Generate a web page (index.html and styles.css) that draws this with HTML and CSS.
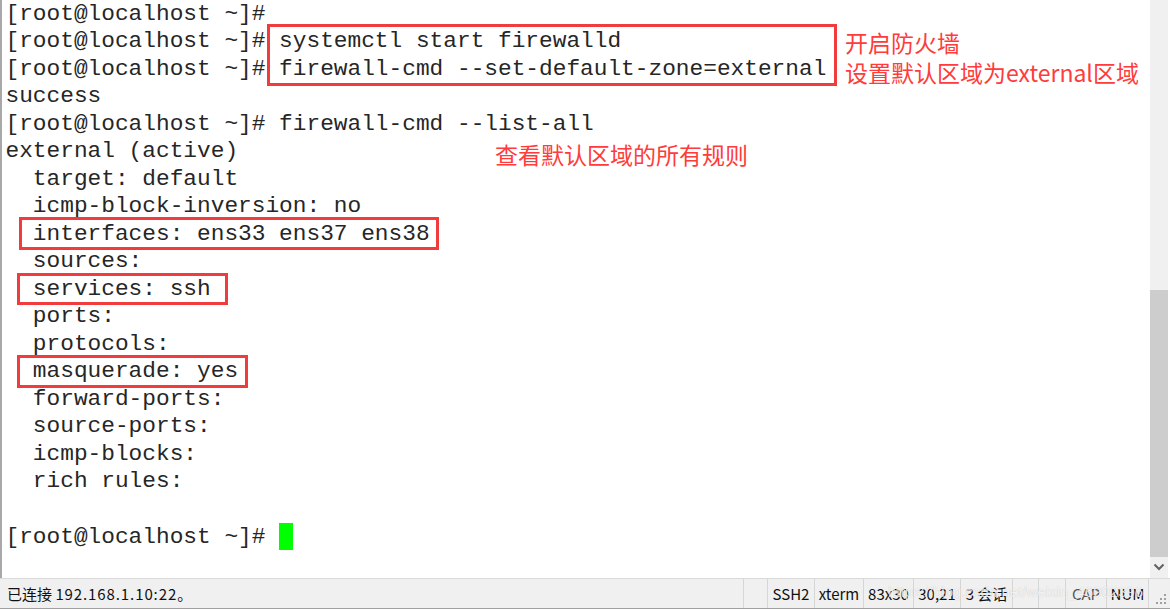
FILE: index.html
```html
<!DOCTYPE html>
<html lang="zh-CN">
<head>
<meta charset="utf-8">
<title>firewalld</title>
<link rel="stylesheet" href="styles.css">
</head>
<body>
<div class="window">
  <div class="main">
    <div class="term">
      <div class="lines">
        <div class="line">[root@localhost ~]#</div>
        <div class="line">[root@localhost ~]# systemctl start firewalld</div>
        <div class="line">[root@localhost ~]# firewall-cmd --set-default-zone=external</div>
        <div class="line">success</div>
        <div class="line">[root@localhost ~]# firewall-cmd --list-all</div>
        <div class="line">external (active)</div>
        <div class="line">  target: default</div>
        <div class="line">  icmp-block-inversion: no</div>
        <div class="line">  interfaces: ens33 ens37 ens38</div>
        <div class="line">  sources:</div>
        <div class="line">  services: ssh</div>
        <div class="line">  ports:</div>
        <div class="line">  protocols:</div>
        <div class="line">  masquerade: yes</div>
        <div class="line">  forward-ports:</div>
        <div class="line">  source-ports:</div>
        <div class="line">  icmp-blocks:</div>
        <div class="line">  rich rules:</div>
        <div class="line"> </div>
        <div class="line">[root@localhost ~]# <span class="cursor"></span></div>
      </div>
      <div class="box box-cmd"></div>
      <div class="box box-if"></div>
      <div class="box box-svc"></div>
      <div class="box box-masq"></div>
      <div class="note note-1">开启防火墙<br>设置默认区域为external区域</div>
      <div class="note note-2">查看默认区域的所有规则</div>
    </div>
    <div class="scrollbar">
      <div class="thumb"></div>
      <div class="arrow">
        <svg width="12" height="8" viewBox="0 0 12 8"><polyline points="1.5,1.5 6,6 10.5,1.5" fill="none" stroke="#606060" stroke-width="2"/></svg>
      </div>
    </div>
  </div>
  <div class="status">
    <div class="status-left">已连接 <span class="addr">192.168.1.10:22</span>。</div>
    <div class="status-right">
      <div class="cell c-empty1"></div>
      <div class="cell c-ssh">SSH2</div>
      <div class="cell c-xterm">xterm</div>
      <div class="cell c-size">83x30</div>
      <div class="cell c-pos">30,21</div>
      <div class="cell c-sess">3 会话</div>
      <div class="cell c-empty2"></div>
      <div class="cell c-empty3"></div>
      <div class="cell c-cap">CAP</div>
      <div class="cell c-num">NUM</div>
      <div class="grip">
        <svg width="12" height="12" viewBox="0 0 12 12" fill="#a0a0a0"><rect x="9" y="1" width="2" height="2"/><rect x="5" y="5" width="2" height="2"/><rect x="9" y="5" width="2" height="2"/><rect x="1" y="9" width="2" height="2"/><rect x="5" y="9" width="2" height="2"/><rect x="9" y="9" width="2" height="2"/></svg>
      </div>
    </div>
    <div class="watermark">https://blog.csdn.net/weixin_46902396</div>
  </div>
</div>
</body>
</html>
```

FILE: styles.css
```css
html, body {
  margin: 0;
  padding: 0;
  background: #ffffff;
}

.window {
  width: 1170px;
  height: 609px;
  display: flex;
  flex-direction: column;
  overflow: hidden;
}

.main {
  height: 578px;
  display: flex;
  flex-direction: row;
}

.term {
  position: relative;
  flex: 1;
  border-left: 2px solid #a8a8a8;
  background: #ffffff;
  overflow: hidden;
}

.lines {
  margin-top: 0.5px;
  padding-left: 3.5px;
  font-family: "Liberation Mono", "Courier New", monospace;
  font-size: 22.8px;
  color: #262626;
}

.line {
  height: 27.5px;
  line-height: 27.5px;
  white-space: pre;
}

.cursor {
  display: inline-block;
  width: 14px;
  height: 27px;
  background: #00ff00;
  vertical-align: -7px;
}

.box {
  position: absolute;
  border: 3px solid #f03c3c;
  box-sizing: border-box;
}

.box-cmd {
  left: 265px;
  top: 24px;
  width: 570px;
  height: 62px;
}

.box-if {
  left: 17px;
  top: 217px;
  width: 420px;
  height: 33px;
}

.box-svc {
  left: 15px;
  top: 273px;
  width: 211px;
  height: 32px;
}

.box-masq {
  left: 15px;
  top: 355px;
  width: 231px;
  height: 33px;
}

.note {
  position: absolute;
  font-family: "Noto Sans CJK SC", "Noto Sans", sans-serif;
  font-size: 23px;
  line-height: 30px;
  color: #ff3b3b;
  white-space: nowrap;
}

.note-1 {
  left: 843px;
  top: 27px;
}

.note-2 {
  left: 493px;
  top: 139px;
}

.scrollbar {
  position: relative;
  width: 18px;
  margin-right: 2px;
  background: #f0f0f0;
}

.thumb {
  position: absolute;
  left: 0;
  right: 0;
  top: 290px;
  height: 267px;
  background: #cdcdcd;
}

.arrow {
  position: absolute;
  left: 0;
  right: 0;
  bottom: 4px;
  height: 14px;
  display: flex;
  align-items: center;
  justify-content: center;
}

.status {
  position: relative;
  height: 31px;
  box-sizing: border-box;
  border-top: 1px solid #dadada;
  border-bottom: 1px solid #a0a0a0;
  background: #f0f0f0;
  display: flex;
  align-items: center;
  font-family: "Noto Sans CJK SC", "Noto Sans", sans-serif;
  font-size: 15px;
  color: #111111;
}

.status-left {
  flex: 1;
  padding-left: 7px;
}

.addr {
  letter-spacing: 0.9px;
}

.status-right {
  display: flex;
  align-items: stretch;
  height: 100%;
}

.cell {
  border-left: 1px solid #d6d6d6;
  display: flex;
  align-items: center;
  justify-content: center;
  box-sizing: border-box;
  white-space: nowrap;
}

.c-empty1 { width: 24px; }
.c-ssh { width: 47px; }
.c-xterm { width: 49px; }
.c-size { width: 50px; }
.c-pos { width: 47px; }
.c-sess { width: 52px; }
.c-empty2 { width: 26px; }
.c-empty3 { width: 27px; }
.c-cap { width: 41px; color: #555555; }
.c-num { width: 42px; }

.grip {
  width: 22px;
  border-left: 1px solid #d6d6d6;
  display: flex;
  align-items: flex-end;
  justify-content: flex-end;
  padding: 0 3px 3px 0;
  box-sizing: border-box;
}

.watermark {
  position: absolute;
  left: 888px;
  top: 4px;
  font-family: "Liberation Sans", Arial, sans-serif;
  font-size: 15px;
  color: rgba(255, 255, 255, 0.8);
  text-shadow: 0 0 1px rgba(0, 0, 0, 0.22);
  white-space: nowrap;
  pointer-events: none;
}
```
